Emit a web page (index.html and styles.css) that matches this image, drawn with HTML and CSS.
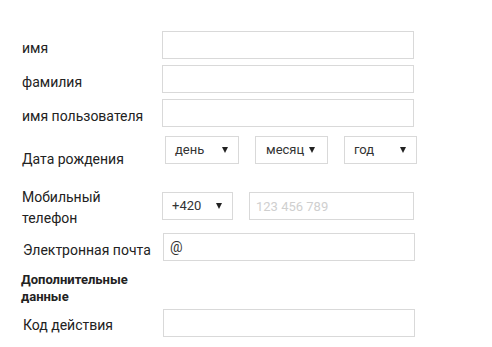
FILE: index.html
```html
<!DOCTYPE html>
<html lang="ru">
<head>
    <meta charset="UTF-8">
    <title>Регистрация</title>
    <link rel="stylesheet" href="styles.css">
</head>
<body>
    <form class="reg-form">
        <div class="row">
            <label class="label" for="first-name">имя</label>
            <input class="field" type="text" id="first-name">
        </div>
        <div class="row">
            <label class="label" for="last-name">фамилия</label>
            <input class="field" type="text" id="last-name">
        </div>
        <div class="row">
            <label class="label" for="username">имя пользователя</label>
            <input class="field" type="text" id="username">
        </div>

        <div class="row row-date">
            <label class="label">Дата рождения</label>
            <div class="date-group">
                <div class="select sel-day">день</div>
                <div class="select sel-month">месяц</div>
                <div class="select sel-year">год</div>
            </div>
        </div>

        <div class="row row-phone">
            <label class="label label-two">Мобильный<br>телефон</label>
            <div class="phone-group">
                <div class="select sel-code">+420</div>
                <input class="field phone" type="text" placeholder="123 456 789">
            </div>
        </div>

        <div class="row row-email">
            <label class="label label-email" for="email">Электронная почта</label>
            <input class="field email" type="text" id="email" value="@">
        </div>

        <div class="section-title">Дополнительные<br>данные</div>

        <div class="row">
            <label class="label label-code" for="code">Код действия</label>
            <input class="field" type="text" id="code">
        </div>
    </form>
</body>
</html>
```

FILE: styles.css
```css
body {
    margin: 0;
    background-color: #fff;
    font-family: Roboto, Arial, sans-serif;
    font-size: 14px;
    color: #222;
}

.reg-form {
    padding: 31px 0 0 22px;
}

.row {
    display: flex;
    align-items: flex-start;
    margin-bottom: 6px;
}

/* labels sit a little below the middle of their field */
.label {
    width: 140px;
    height: 28px;
    line-height: 35px;
    white-space: nowrap;
}

.field {
    box-sizing: border-box;
    width: 252px;
    height: 28px;
    margin: 0;
    padding: 0 6px;
    border: 1px solid #d9d9d9;
    border-radius: 0;
    font-family: Roboto, Arial, sans-serif;
    font-size: 14px;
    color: #333;
    outline: none;
}

.field::placeholder {
    color: #cfcfcf;
}

/* date of birth */
.row-date {
    margin-top: 9px;
}

.row-date .label {
    line-height: 46px;
}

.date-group {
    display: flex;
    gap: 16px;
    margin-left: 3px;
}

.select {
    position: relative;
    box-sizing: border-box;
    height: 28px;
    line-height: 26px;
    padding-left: 9px;
    border: 1px solid #d9d9d9;
    font-size: 13px;
    color: #333;
}

.select::after {
    content: "";
    position: absolute;
    right: 10px;
    top: 10px;
    border-left: 3px solid transparent;
    border-right: 3px solid transparent;
    border-top: 6px solid #222;
}

.sel-day { width: 74px; }
.sel-month { width: 73px; padding-left: 10px; }
.sel-month::after { right: 12px; }
.sel-year { width: 73px; }

/* phone */
.row-phone {
    margin-top: 23px;
    margin-bottom: 4px;
}

.label-two {
    height: auto;
    line-height: 21px;
}

.phone-group {
    display: flex;
    gap: 16px;
    margin-top: 5px;
}

.sel-code { width: 71px; }

.phone {
    width: 165px;
    font-size: 13px;
}

.label-email {
    line-height: 34px;
    padding-left: 1px;
}

.label-code {
    line-height: 32px;
    padding-left: 1px;
}

/* section */
.section-title {
    font-size: 13px;
    font-weight: bold;
    line-height: 17px;
    margin: 10px 0 4px -1px;
}
```
